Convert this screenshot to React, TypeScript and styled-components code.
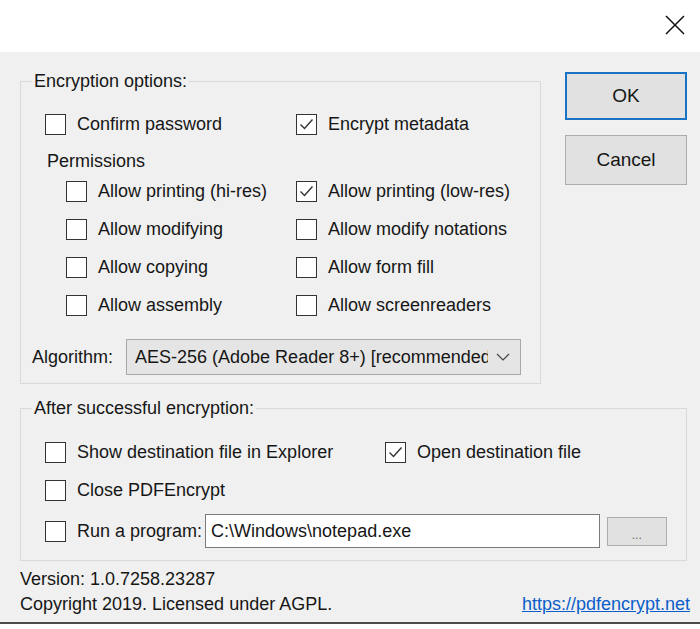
import React from "react";
import styled, { createGlobalStyle } from "styled-components";

const GlobalStyle = createGlobalStyle`
  html, body {
    margin: 0;
    padding: 0;
    background: #ffffff;
  }
  body {
    font-family: "Liberation Sans", Arial, sans-serif;
    font-size: 18px;
    color: #161616;
  }
`;

const Window = styled.div`
  width: 700px;
  height: 629px;
  display: flex;
  flex-direction: column;
  background: #ffffff;
`;

const TitleBar = styled.div`
  height: 52px;
  display: flex;
  justify-content: flex-end;
  align-items: center;
  padding-right: 13px;
  box-sizing: border-box;
`;

const CloseButton = styled.button`
  width: 24px;
  height: 24px;
  padding: 0;
  border: none;
  background: transparent;
  display: flex;
  align-items: center;
  justify-content: center;
  margin-top: -3px;
`;

const Body = styled.div`
  height: 572px;
  background: #f0f0f0;
  border-bottom: 2px solid #4a4a4a;
  padding: 19px 13px 0 20px;
  box-sizing: border-box;
  display: flex;
  flex-direction: column;
`;

const TopRow = styled.div`
  display: flex;
  align-items: flex-start;
  gap: 24px;
`;

const Group = styled.fieldset<{ $width?: number }>`
  margin: 0;
  padding: 0;
  border: 1px solid #d9d9d9;
  width: ${({ $width }) => ($width ? `${$width}px` : "auto")};
  box-sizing: border-box;
  min-width: 0;
`;

const Legend = styled.legend`
  margin-left: 11px;
  padding: 0 2px;
  line-height: 20px;
  height: 20px;
`;

const GroupBody = styled.div<{ $top: number; $bottom: number }>`
  padding: ${({ $top, $bottom }) => `${$top}px 19px ${$bottom}px 11px`};
  display: flex;
  flex-direction: column;
`;

const CheckGrid = styled.div<{ $indent?: boolean }>`
  display: grid;
  grid-template-columns: ${({ $indent }) => ($indent ? "230px" : "251px")} auto;
  row-gap: 16px;
  padding-left: ${({ $indent }) => ($indent ? "34px" : "13px")};
`;

const CheckRow = styled.label`
  display: flex;
  align-items: center;
  gap: 11px;
  height: 22px;
  line-height: 22px;
  white-space: nowrap;
`;

const Box = styled.span`
  width: 21px;
  height: 21px;
  box-sizing: border-box;
  border: 1.5px solid #333333;
  background: #ffffff;
  display: flex;
  align-items: center;
  justify-content: center;
  flex-shrink: 0;
`;

const SectionLabel = styled.div`
  padding-left: 15px;
  height: 22px;
  line-height: 22px;
  margin: 15px 0 8px;
`;

const AlgorithmRow = styled.div`
  display: flex;
  align-items: center;
  margin-top: 23px;
  gap: 13px;
`;

const Select = styled.div`
  width: 395px;
  height: 36px;
  box-sizing: border-box;
  border: 1px solid #a8a8a8;
  background: #e5e5e5;
  display: flex;
  align-items: center;
  padding: 0 10px 0 8px;
  gap: 8px;
`;

const SelectText = styled.span`
  flex: 1;
  overflow: hidden;
  white-space: nowrap;
`;

const ButtonColumn = styled.div`
  display: flex;
  flex-direction: column;
  gap: 15px;
  margin-top: 1px;
`;

const DialogButton = styled.button<{ $default?: boolean }>`
  width: 122px;
  height: ${({ $default }) => ($default ? "48px" : "50px")};
  box-sizing: border-box;
  background: #e1e1e1;
  border: ${({ $default }) => ($default ? "2.5px solid #1a73c2" : "1px solid #adadad")};
  font-family: "Liberation Sans", Arial, sans-serif;
  font-size: 19px;
  color: #161616;
  padding: 0;
`;

const SecondGroup = styled(Group)`
  margin-top: 14px;
`;

const StackRows = styled.div`
  display: flex;
  flex-direction: column;
  gap: 16px;
  padding-left: 13px;
`;

const SplitRow = styled.div`
  display: flex;
  align-items: center;
`;

const SplitLeft = styled.div`
  width: 340px;
`;

const ProgramRow = styled.div`
  display: flex;
  align-items: center;
  margin-top: -3px;
`;

const TextInput = styled.div`
  width: 398px;
  height: 34px;
  box-sizing: border-box;
  margin-left: 3px;
  background: #ffffff;
  border: 1px solid #7a7a7a;
  padding-left: 5px;
  display: flex;
  align-items: center;
  white-space: nowrap;
`;

const BrowseButton = styled.button`
  width: 61px;
  height: 29px;
  box-sizing: border-box;
  margin-left: 7px;
  background: #e1e1e1;
  border: 1px solid #adadad;
  color: #666666;
  font-family: "Liberation Sans", Arial, sans-serif;
  font-size: 12px;
  padding: 8px 0 0;
`;

const Footer = styled.div`
  display: flex;
  justify-content: space-between;
  align-items: flex-end;
  margin-top: 6px;
  margin-right: -3px;
  line-height: 25px;
`;

const FooterInfo = styled.div`
  display: flex;
  flex-direction: column;
`;

const Link = styled.a`
  color: #0b5ec9;
  text-decoration: underline;
`;

function CheckMark() {
  return (
    <svg width="17" height="17" viewBox="0 0 17 17">
      <path d="M2.5 8.5 L6.5 12.5 L14.5 3.5" fill="none" stroke="#333" strokeWidth="1.4" />
    </svg>
  );
}

function Check({ label, checked }: { label: string; checked?: boolean }) {
  return (
    <CheckRow>
      <Box>{checked && <CheckMark />}</Box>
      <span>{label}</span>
    </CheckRow>
  );
}

export default function App() {
  return (
    <>
      <GlobalStyle />
      <Window>
        <TitleBar>
          <CloseButton aria-label="Close">
            <svg width="20" height="20" viewBox="0 0 20 20">
              <path d="M1 1 L19 19 M19 1 L1 19" stroke="#111" strokeWidth="1.5" />
            </svg>
          </CloseButton>
        </TitleBar>
        <Body>
          <TopRow>
            <Group $width={521}>
              <Legend>Encryption options:</Legend>
              <GroupBody $top={22} $bottom={8}>
                <CheckGrid>
                  <Check label="Confirm password" />
                  <Check label="Encrypt metadata" checked />
                </CheckGrid>
                <SectionLabel>Permissions</SectionLabel>
                <CheckGrid $indent>
                  <Check label="Allow printing (hi-res)" />
                  <Check label="Allow printing (low-res)" checked />
                  <Check label="Allow modifying" />
                  <Check label="Allow modify notations" />
                  <Check label="Allow copying" />
                  <Check label="Allow form fill" />
                  <Check label="Allow assembly" />
                  <Check label="Allow screenreaders" />
                </CheckGrid>
                <AlgorithmRow>
                  <span>Algorithm:</span>
                  <Select>
                    <SelectText>AES-256 (Adobe Reader 8+) [recommended]</SelectText>
                    <svg width="14" height="8" viewBox="0 0 14 8">
                      <path d="M1 1 L7 7 L13 1" fill="none" stroke="#444" strokeWidth="1.2" />
                    </svg>
                  </Select>
                </AlgorithmRow>
              </GroupBody>
            </Group>
            <ButtonColumn>
              <DialogButton $default>OK</DialogButton>
              <DialogButton>Cancel</DialogButton>
            </ButtonColumn>
          </TopRow>

          <SecondGroup>
            <Legend>After successful encryption:</Legend>
            <GroupBody $top={23} $bottom={12}>
              <StackRows>
                <SplitRow>
                  <SplitLeft>
                    <Check label="Show destination file in Explorer" />
                  </SplitLeft>
                  <Check label="Open destination file" checked />
                </SplitRow>
                <Check label="Close PDFEncrypt" />
                <ProgramRow>
                  <Check label="Run a program:" />
                  <TextInput>C:\Windows\notepad.exe</TextInput>
                  <BrowseButton>...</BrowseButton>
                </ProgramRow>
              </StackRows>
            </GroupBody>
          </SecondGroup>

          <Footer>
            <FooterInfo>
              <span>Version: 1.0.7258.23287</span>
              <span>Copyright 2019. Licensed under AGPL.</span>
            </FooterInfo>
            <Link href="#">https://pdfencrypt.net</Link>
          </Footer>
        </Body>
      </Window>
    </>
  );
}
